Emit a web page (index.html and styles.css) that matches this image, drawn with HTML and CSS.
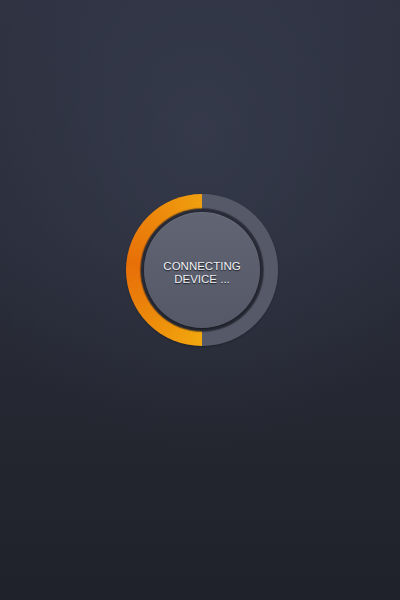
FILE: index.html
```html
<!DOCTYPE html>
<html>
<head>
<meta charset="utf-8">
<link rel="stylesheet" href="styles.css">
</head>
<body>
<div class="screen">
  <div class="ring">
    <div class="hole">
      <div class="button">
        <span class="label">CONNECTING<br>DEVICE ...</span>
      </div>
    </div>
  </div>
</div>
</body>
</html>
```
FILE: styles.css
```css
html, body {
  margin: 0;
  padding: 0;
  width: 400px;
  height: 600px;
  overflow: hidden;
}
.screen {
  width: 400px;
  height: 600px;
  display: flex;
  align-items: center;
  justify-content: center;
  padding-left: 4px;
  padding-bottom: 60px;
  box-sizing: border-box;
  background:
    radial-gradient(ellipse 260px 320px at 200px 130px, rgba(60,65,85,0.55), rgba(60,65,85,0) 100%),
    linear-gradient(180deg, #2d3140 0%, #2a2e3b 40%, #23262f 75%, #1f212b 100%);
  font-family: "Liberation Sans", Arial, sans-serif;
}
.ring {
  width: 152px;
  height: 152px;
  border-radius: 50%;
  background: conic-gradient(from 0deg, #565a68 0deg 180deg, #f2a80e 180deg, #ea7c0a 250deg, #e86f08 275deg, #f0a00f 360deg);
  display: flex;
  align-items: center;
  justify-content: center;
  box-shadow: 0 1px 2px rgba(0,0,0,0.25);
}
.hole {
  width: 122px;
  height: 122px;
  border-radius: 50%;
  background: #2a2d39;
  display: flex;
  align-items: center;
  justify-content: center;
  box-shadow: 0 0 1px 1px rgba(30,32,42,0.6);
}
.button {
  width: 116px;
  height: 116px;
  border-radius: 50%;
  background: linear-gradient(180deg, #606473 0%, #5a5e6d 50%, #545867 100%);
  box-shadow: inset 0 1px 0 rgba(255,255,255,0.07), 0 1px 3px rgba(0,0,0,0.5);
  display: flex;
  align-items: center;
  justify-content: center;
  padding-top: 5px;
  box-sizing: border-box;
}
.label {
  color: #f0f1f4;
  font-size: 11.5px;
  line-height: 12.5px;
  text-align: center;
  text-shadow: 0 1px 1px rgba(0,0,0,0.7);
}
```
